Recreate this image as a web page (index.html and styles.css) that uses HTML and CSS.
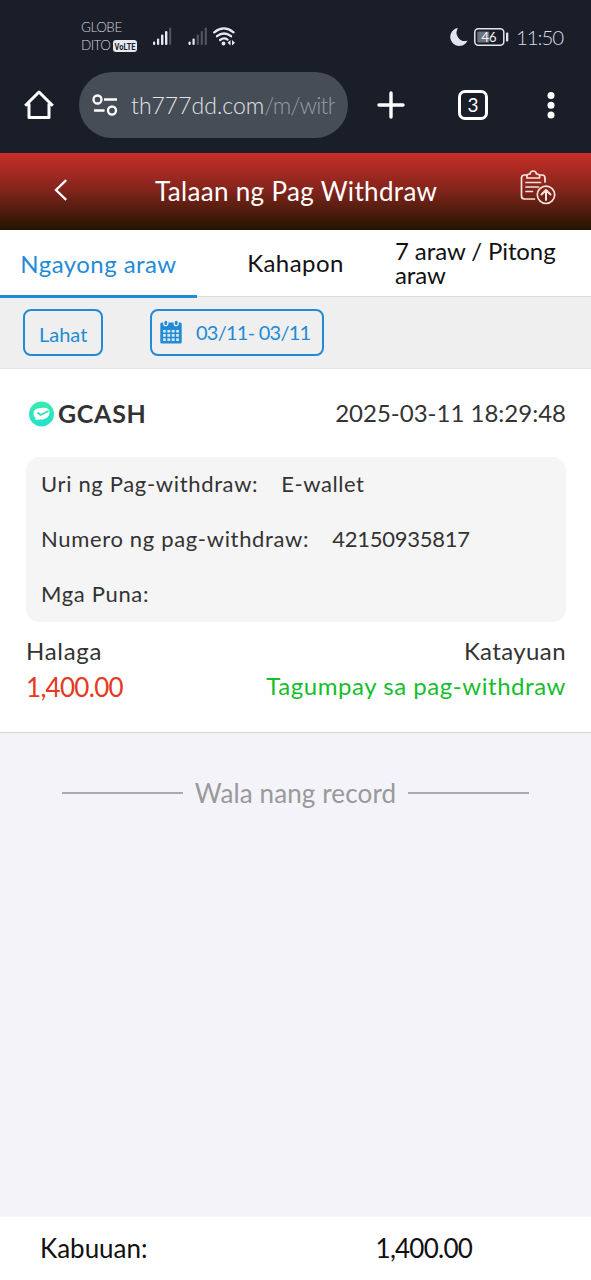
FILE: index.html
```html
<!DOCTYPE html>
<html lang="fil">
<head>
<meta charset="utf-8">
<meta name="viewport" content="width=device-width">
<title>Talaan ng Pag Withdraw</title>
<link rel="stylesheet" href="styles.css">
</head>
<body>
<div class="status">
  <div class="carriers"><div>GLOBE</div><div class="carrier-row"><span class="dito">DITO</span><svg class="volte" width="24" height="12" viewBox="0 0 24 12"><rect width="24" height="12" rx="3" fill="#e6e9f2"/><text x="1.5" y="10" textLength="21" lengthAdjust="spacingAndGlyphs" class="volte-text">VoLTE</text></svg></div></div>
  <svg class="signals" width="84" height="24" viewBox="0 0 84 24" fill="#e6e9f2">
    <g><rect x="1" y="14.5" width="2.2" height="3.5" rx="1"/><rect x="5" y="11.5" width="2.2" height="6.5" rx="1"/><rect x="9" y="7.5" width="2.4" height="10.5" rx="1"/><rect x="13" y="4" width="2.4" height="14" rx="1"/><rect x="17.2" y="0.5" width="2" height="17.5" rx="1" fill="#505560"/></g>
    <g><rect x="36.500" y="14.500" width="2.200" height="3.500" rx="1"/><rect x="40.500" y="11.500" width="2.200" height="6.500" rx="1"/><rect x="44.700" y="7.500" width="2.200" height="10.500" rx="1" fill="#505560"/><rect x="48.700" y="4" width="2.200" height="14" rx="1" fill="#505560"/><rect x="52.700" y=".5" width="2.200" height="17.500" rx="1" fill="#505560"/></g>
    <g fill="none" stroke="#e6e9f2" stroke-width="2.300" stroke-linecap="round"><path d="M62.200 5.300Q72 -2.500 81.500 5.300"/><path d="M65 9.200Q72 3.700 79 9.200"/><path d="M68.100 13Q72 10 75.500 12.600"/></g>
    <circle cx="71.500" cy="16.500" r="1.900"/><path d="M78.500 13v5.500l-3-2.800zM80 13v5.500l3-2.800z"/>
  </svg>
  <div class="status-right">
    <svg width="18" height="20" viewBox="0 0 18 20"><path d="M8 1A9 9 0 1 0 17.500 13.500A8.300 8.300 0 0 1 8 1Z" fill="#e2e5f1"/></svg>
    <svg class="battery" width="35" height="18" viewBox="0 0 35 18"><rect x=".8" y=".8" width="29" height="16.400" rx="3.500" fill="none" stroke="#e2e5f1" stroke-width="1.500"/><rect x="3.300" y="3.500" width="12" height="11" rx="1" fill="#6d727b"/><rect x="32" y="4.500" width="2.300" height="9" rx=".8" fill="#e2e5f1"/><text x="7.500" y="13.500" textLength="15" class="battery-text">46</text></svg>
    <span class="clock">11:50</span>
  </div>
</div>
<div class="browser">
  <svg class="home" width="30" height="30" viewBox="0 0 30 30"><path d="M1.200 15.800L15 2L28.800 15.800M5 13.500V27.500H25V13.500" fill="none" stroke="#fff" stroke-width="3" stroke-linejoin="round"/></svg>
  <div class="url"><svg width="26" height="22" viewBox="0 0 26 22" fill="none" stroke="#fff" stroke-width="2.300"><circle cx="5.500" cy="5.500" r="4"/><path d="M12 5.500H25M2 16.500H12.500"/><circle cx="20" cy="16.500" r="4"/></svg><span class="url-text">th777dd.com<span class="path">/m/with</span></span></div>
  <svg class="plus" width="28" height="28" viewBox="0 0 28 28"><path d="M14 2V26M2 14H26" stroke="#fff" stroke-width="3.400" stroke-linecap="round"/></svg>
  <div class="tabs-count">3</div>
  <svg class="dots" width="8" height="28" viewBox="0 0 8 28" fill="#fff"><circle cx="4" cy="4.500" r="3.500"/><circle cx="4" cy="14.200" r="3.500"/><circle cx="4" cy="24" r="3.500"/></svg>
</div>
<header class="header">
  <svg class="back" width="14" height="22" viewBox="0 0 14 22"><path d="M12.200 1.200L2 11L12.200 20.800" fill="none" stroke="#fff" stroke-width="2.300"/></svg>
  <h1>Talaan ng Pag Withdraw</h1>
  <svg class="report" width="36" height="36" viewBox="0 0 36 36" fill="none" stroke="#f7e5dd" stroke-width="1.700" stroke-linecap="round" stroke-linejoin="round"><path d="M6.500 5H4.500Q1.500 5 1.500 8V26Q1.500 29 4.500 29H14.500M20 5H22Q25 5 25 8V12"/><path d="M7 8Q6 4 10 4Q10.500 1 13.200 1Q16 1 16.500 4Q20.500 4 19.500 8Z"/><path d="M6 12.500H20.500M6 17H18.500M6 21.500H12.500"/><circle cx="26" cy="24.800" r="8.700"/><path d="M26 30V20M21.500 24.500L26 20L30.500 24.500" stroke-width="2"/></svg>
</header>
<nav class="tabs"><div class="tab active"><span>Ngayong araw</span></div><div class="tab"><span>Kahapon</span></div><div class="tab week"><span>7 araw / Pitong</span><span>araw</span></div></nav>
<section class="filters">
  <div class="chip all"><span>Lahat</span></div>
  <div class="chip date"><svg width="22" height="24" viewBox="0 0 22 24"><rect x=".3" y="2.500" width="21.400" height="21" rx="1.500" fill="#238bd5"/><path d="M2 9H20V22H2Z" fill="#d4e6f3"/><path d="M2 9.200H20M2 13.300H20M2 17.500H20M2 21.700H20M2.300 9V22M6.600 9V22M11 9V22M15.400 9V22M19.700 9V22" stroke="#238bd5" stroke-width="1.500"/><g fill="#238bd5" stroke="#efefef" stroke-width="1.200"><rect x="3.800" y=".2" width="4" height="5.500" rx="2"/><rect x="14.200" y=".2" width="4" height="5.500" rx="2"/></g></svg><span>03/11- 03/11</span></div>
</section>
<main class="card">
  <div class="card-head"><svg width="26" height="26" viewBox="0 0 26 26"><defs><linearGradient id="mint" x2="0" y2="1"><stop stop-color="#38eda9"/><stop offset="1" stop-color="#25dfd0"/></linearGradient></defs><circle cx="13.500" cy="13" r="12.500" fill="url(#mint)"/><path d="M5.500 13C5.500 8.500 9 7 13.500 7C19 6 21.500 8 21.500 11C21.500 16.500 17.500 18.500 12.500 18.500L7.500 19L7.500 17Q5.500 15.500 5.500 13Z" fill="#fff"/><path d="M9.500 11.500L12.500 14L20.500 10" fill="none" stroke="#2ddfbd" stroke-width="1.800"/></svg><span class="bank">GCASH</span><span class="stamp">2025-03-11 18:29:48</span></div>
  <div class="details">
    <div class="row"><span class="key">Uri ng Pag-withdraw:</span><span class="kind">E-wallet</span></div>
    <div class="row"><span class="key">Numero ng pag-withdraw:</span><span class="number">42150935817</span></div>
    <div class="row"><span class="key">Mga Puna:</span></div>
  </div>
  <div class="summary label"><span class="amount-label">Halaga</span><span class="state-label">Katayuan</span></div>
  <div class="summary value"><span class="amount">1,400.00</span><span class="success">Tagumpay sa pag-withdraw</span></div>
</main>
<section class="empty"><i></i><span>Wala nang record</span><i></i></section>
<footer class="total"><span class="total-label">Kabuuan:</span><span class="total-value">1,400.00</span></footer>
</body>
</html>
```
FILE: styles.css
```css
* { box-sizing: border-box; }
body { margin: 0; width: 591px; height: 1280px; display: flex; flex-direction: column; overflow: hidden; background: #f3f3f9; font-family: Lato, sans-serif; color: #333; }
svg { display: block; flex: none; }
span, h1 { white-space: nowrap; }
.status { height: 72px; flex: none; background: #1a1e29; display: flex; padding: 18px 28px 0 81px; color: #cfd2da; }
.carriers { width: 71px; font-size: 13.500px; line-height: 18.500px; font-weight: 300; letter-spacing: -.500px; }
.carrier-row { display: flex; align-items: center; gap: 2px; height: 18px; }
.dito { width: 30px; font-size: 13.500px; letter-spacing: -.600px; }
.volte-text { font: bold 9.500px Roboto, sans-serif; letter-spacing: 0; fill: #1a1e29; }
.signals { margin-top: 9px; }
.status-right { margin-left: auto; display: flex; align-items: center; height: 37px; }
.battery { margin-left: 6px; }
.battery-text { font: 13px Lato, sans-serif; fill: #f0f2f8; }
.clock { margin-left: 7px; font-size: 20.500px; font-weight: 300; color: #d8dbe5; letter-spacing: -1.100px; }
.browser { height: 81px; flex: none; background: #1a1e29; display: flex; align-items: center; padding: 0 36px 15px 24px; }
.url { width: 269px; height: 66px; border-radius: 33px; background: #464d56; margin-left: 25px; padding-left: 13px; display: flex; align-items: center; }
.url-text { margin-left: 13px; font-size: 23px; color: #e1e4ea; font-weight: 300; width: 204px; overflow: hidden; }
.path { color: #969ca5; letter-spacing: -.850px; }
.plus { margin-left: 29px; }
.tabs-count { margin-left: 53px; width: 30px; height: 30px; border: 3px solid #fff; border-radius: 7px; color: #fff; font-size: 19px; line-height: 24px; text-align: center; }
.dots { margin-left: 59px; }
.header { height: 77px; flex: none; background: linear-gradient(#c82e28, #7f241b 50%, #221500); display: flex; align-items: center; padding: 0 35px 3px 54px; color: #fff; }
h1 { margin: 1px 0 0 87px; font-size: 26px; font-weight: 400; width: 283px; letter-spacing: .330px; }
.report { margin-left: auto; margin-top: -4px; }
.tabs { height: 67px; flex: none; background: #fff; display: grid; grid-template-columns: repeat(3, 1fr); color: #111; font-size: 24px; line-height: 24px; border-bottom: 1px solid #dcdcdc; }
.tab { display: flex; align-items: center; justify-content: center; letter-spacing: .450px; }
.active { color: #238bd5; border-bottom: 3px solid #238bd5; margin-bottom: -2px; padding-top: 2px; }
.week { flex-direction: column; align-items: flex-start; padding-left: 1px; letter-spacing: -.100px; }
.filters { height: 72px; flex: none; background: #efefef; padding: 12px 23px; display: flex; gap: 47px; border-bottom: 1px solid #e6e6e6; }
.tabs { position: relative; }
.chip { height: 47px; border: 1.500px solid #238bd5; border-width: 2px; border-radius: 8px; color: #238bd5; font-size: 20px; display: flex; align-items: center; }
.all { width: 80px; padding: 2px 0 0 14px; }
.date { width: 174px; padding: 0 0 1px 8px; gap: 14px; letter-spacing: -.750px; }
.card { height: 364px; flex: none; background: #fff; padding: 29px 25px 0 26px; border-bottom: 1px solid #d6d6d9; }
.card-head { height: 31px; display: flex; align-items: center; padding-left: 2px; font-size: 24px; }
.bank { margin-left: 4px; padding-bottom: 2px; font-size: 25px; font-weight: 700; letter-spacing: .700px; }
.stamp { margin-left: auto; padding-bottom: 2px; }
.details { height: 165px; margin-top: 28px; padding: 0 15px; border-radius: 13px; background: #f5f5f5; font-size: 22px; }
.row { height: 55px; padding-bottom: 2px; display: flex; align-items: center; gap: 23px; }
.key { letter-spacing: .660px; }
.kind { letter-spacing: .550px; }
.number { letter-spacing: -.250px; }
.summary { display: flex; justify-content: space-between; align-items: center; height: 36px; font-size: 24px; }
.label { margin-top: 10px; }
.amount-label { letter-spacing: .700px; }
.state-label { letter-spacing: .400px; }
.amount { color: #e53922; font-size: 26px; letter-spacing: -.700px; padding-top: 2px; }
.success { color: #16bd2d; letter-spacing: .550px; padding-bottom: 1px; }
.empty { margin-top: 42px; height: 36px; display: flex; align-items: center; justify-content: center; gap: 12px; font-size: 26px; letter-spacing: .130px; color: #999; }
.empty i { width: 121px; height: 2px; background: #a9a9ae; }
.total { margin-top: auto; height: 63px; background: #fff; color: #111; display: flex; align-items: center; padding: 0 0 1px 40px; font-size: 26px; }
.total-value { margin-left: 228px; letter-spacing: -.750px; }
```
